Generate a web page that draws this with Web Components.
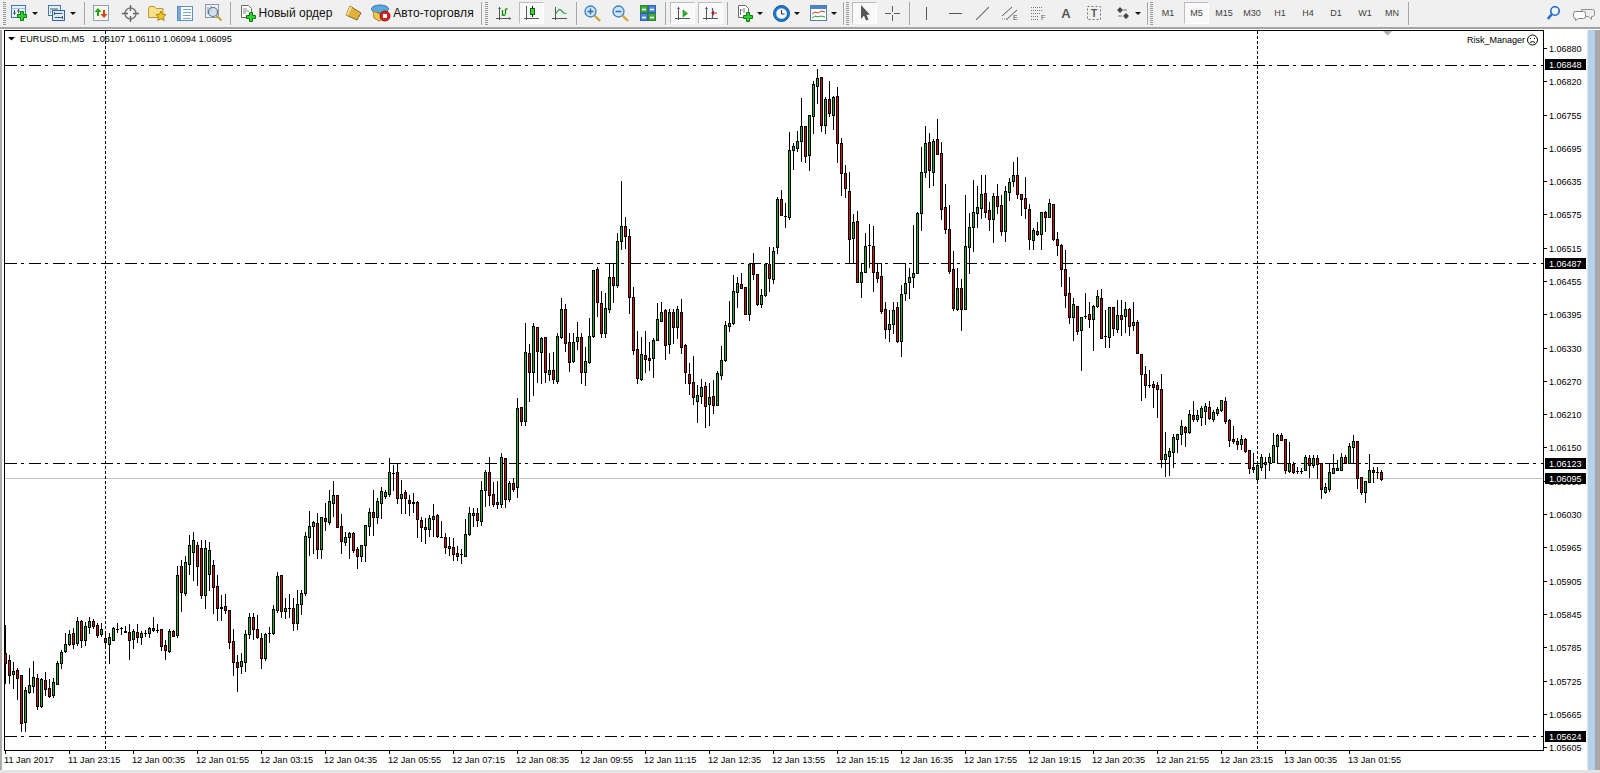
<!DOCTYPE html>
<html>
<head>
<meta charset="utf-8">
<style>
    html, body { margin: 0; height: 100%; overflow: hidden; background: #fff; }
    body { display: flex; flex-direction: column; width: 1600px; height: 773px; font-family: "Liberation Sans", Arial, sans-serif; }
</style>
</head>
<body>
<mt-toolbar>
    <mt-grip></mt-grip>
    <mt-tool w="21"><mt-icon name="newchart"></mt-icon></mt-tool>
    <mt-drop w="10"></mt-drop>
    <mt-tool w="21" ml="6"><mt-icon name="profile"></mt-icon></mt-tool>
    <mt-drop w="11"></mt-drop>
    <mt-sep ml="4"></mt-sep>
    <mt-tool w="28" ml="1"><mt-icon name="market"></mt-icon></mt-tool>
    <mt-tool w="28" ml="1"><mt-icon name="target"></mt-icon></mt-tool>
    <mt-tool w="26"><mt-icon name="fav"></mt-icon></mt-tool>
    <mt-tool w="28" ml="1"><mt-icon name="nav"></mt-icon></mt-tool>
    <mt-tool w="28" ml="1"><mt-icon name="tester"></mt-icon></mt-tool>
    <mt-sep></mt-sep>
    <mt-tool w="100" ml="4"><mt-icon name="order"></mt-icon><span>Новый ордер</span></mt-tool>
    <mt-tool w="24" ml="5"><mt-icon name="gold"></mt-icon></mt-tool>
    <mt-tool w="109" ml="3"><mt-icon name="auto"></mt-icon><span class="wide">Авто-торговля</span></mt-tool>
    <mt-sep ml="2"></mt-sep>
    <mt-grip w="7"></mt-grip>
    <mt-tool w="27"><mt-icon name="bars"></mt-icon></mt-tool>
    <mt-tool w="25" ml="2" pressed><mt-icon name="candles"></mt-icon></mt-tool>
    <mt-tool w="28" ml="1"><mt-icon name="line"></mt-icon></mt-tool>
    <mt-sep ml="1"></mt-sep>
    <mt-tool w="28"><mt-icon name="zoomin"></mt-icon></mt-tool>
    <mt-tool w="28"><mt-icon name="zoomout"></mt-icon></mt-tool>
    <mt-tool w="28"><mt-icon name="tile"></mt-icon></mt-tool>
    <mt-sep ml="1"></mt-sep>
    <mt-tool w="25" ml="3" pressed><mt-icon name="scroll"></mt-icon></mt-tool>
    <mt-tool w="25" ml="3" pressed><mt-icon name="shift"></mt-icon></mt-tool>
    <mt-sep ml="2"></mt-sep>
    <mt-tool w="24" ml="4"><mt-icon name="indic"></mt-icon></mt-tool>
    <mt-drop w="6"></mt-drop>
    <mt-tool w="24" ml="6"><mt-icon name="clock"></mt-icon></mt-tool>
    <mt-drop w="7"></mt-drop>
    <mt-tool w="25" ml="6"><mt-icon name="templ"></mt-icon></mt-tool>
    <mt-drop w="5"></mt-drop>
    <mt-sep ml="5"></mt-sep>
    <mt-grip w="5"></mt-grip>
    <mt-tool w="25" ml="2" pressed><mt-icon name="cursor"></mt-icon></mt-tool>
    <mt-tool w="27" ml="2"><mt-icon name="cross"></mt-icon></mt-tool>
    <mt-sep ml="1"></mt-sep>
    <mt-tool w="28" ml="1"><mt-icon name="vline"></mt-icon></mt-tool>
    <mt-tool w="28" ml="1"><mt-icon name="hline"></mt-icon></mt-tool>
    <mt-tool w="26"><mt-icon name="diag"></mt-icon></mt-tool>
    <mt-tool w="28" ml="1"><mt-icon name="channel"></mt-icon></mt-tool>
    <mt-tool w="28"><mt-icon name="fib"></mt-icon></mt-tool>
    <mt-tool w="28"><mt-icon name="textA"></mt-icon></mt-tool>
    <mt-tool w="28"><mt-icon name="textT"></mt-icon></mt-tool>
    <mt-tool w="24" ml="3"><mt-icon name="arrows"></mt-icon></mt-tool>
    <mt-drop w="5"></mt-drop>
    <mt-sep ml="5"></mt-sep>
    <mt-grip w="5"></mt-grip>
    <mt-tool w="28">M1</mt-tool>
    <mt-tool w="25" ml="2" pressed>M5</mt-tool>
    <mt-tool w="28" ml="1">M15</mt-tool>
    <mt-tool w="28">M30</mt-tool>
    <mt-tool w="28">H1</mt-tool>
    <mt-tool w="28">H4</mt-tool>
    <mt-tool w="28">D1</mt-tool>
    <mt-tool w="28" ml="1">W1</mt-tool>
    <mt-tool w="26">MN</mt-tool>
    <mt-sep ml="1"></mt-sep>
    <mt-tool w="26" ml="130"><mt-icon name="search"></mt-icon></mt-tool>
    <mt-tool w="27" ml="4"><mt-icon name="chat"></mt-icon></mt-tool>
</mt-toolbar>
<mt-workspace>
    <mt-chart></mt-chart>
    <mt-strip></mt-strip>
</mt-workspace>
<mt-foot></mt-foot>

<script>
    // high, body top, body bottom, low, colour (page y pixels), one candle every 4px from x=5
    const CANDLES = `
625 653 663 683 r|655 660 675 683 r|662 671 674 688 g|668 670 678 699 r|675 675 723 731 r|687 690 722 731 g|668 685 692 693 g|661 677 686 692 g|674 678 706 709 r|678 679 706 707 g
672 680 689 695 r|679 688 696 697 r|678 682 695 697 g|661 663 684 684 g|650 652 663 668 g|633 644 651 652 g|630 634 644 645 g|628 633 644 648 r|617 621 643 645 g|620 621 640 647 r
622 626 640 645 g|617 621 627 633 g|619 621 626 628 r|623 625 635 637 r|623 629 634 636 g|634 638 642 645 r|633 637 644 663 g|627 628 640 640 g|623 629 629 632 d|627 628 628 634 d
626 631 632 632 r|624 632 640 659 r|629 631 639 648 g|624 632 637 642 r|631 633 637 644 g|630 633 633 636 d|627 628 633 637 g|617 628 630 631 r|624 630 630 632 d|629 629 646 650 r
640 645 650 659 r|629 631 651 652 g|630 631 636 636 r|566 575 635 637 g|560 566 592 611 r|556 562 593 595 g|535 545 564 574 g|532 540 552 580 g|542 545 566 585 r|540 548 595 598 r
540 548 595 608 g|542 550 574 590 g|560 565 587 613 r|575 586 608 620 r|595 607 608 620 g|594 606 610 613 r|610 610 642 648 r|629 641 662 675 r|655 662 667 691 r|653 661 666 673 g
630 634 662 671 g|613 617 634 638 g|613 617 629 639 r|615 629 637 638 r|633 638 658 668 r|633 634 658 660 g|627 633 633 642 d|605 609 633 634 g|572 576 610 612 g|575 575 611 617 r
598 608 611 618 g|594 608 608 617 d|598 608 623 630 r|590 604 623 629 g|590 593 604 614 g|532 536 593 595 g|511 526 537 555 g|521 522 526 553 g|513 523 549 558 r|517 517 549 558 g
503 518 521 530 r|490 501 522 524 g|481 495 503 516 g|495 495 527 527 r|514 526 541 553 r|532 537 542 545 g|532 533 537 558 g|532 533 550 552 r|547 549 556 568 r|545 545 556 561 g
525 525 545 561 g|508 512 526 535 g|490 512 517 535 r|498 501 517 523 g|487 491 503 518 g|490 492 496 498 g|458 472 494 496 g|465 473 473 490 d|463 472 498 503 r|480 494 498 513 g
490 492 498 513 r|495 500 503 515 r|493 502 503 512 r|501 502 519 537 r|517 520 527 541 r|518 527 529 543 r|515 518 529 536 g|504 516 519 536 g|514 515 536 537 r|521 537 537 537 d
533 537 547 553 r|537 546 548 555 g|538 547 554 560 r|546 553 556 560 r|549 554 554 563 d|519 534 556 556 g|507 513 534 535 g|508 513 515 526 g|508 513 520 526 r|481 490 521 525 g
470 472 490 506 g|457 472 495 505 r|482 494 504 506 r|481 502 504 508 r|453 457 504 507 g|458 458 499 507 r|481 483 499 501 g|478 483 489 491 r|398 408 487 497 g|407 407 421 425 r
323 352 421 425 g|344 353 372 401 r|323 326 372 395 g|327 327 351 382 r|337 338 352 383 g|337 337 372 382 r|353 370 374 380 g|352 370 379 383 r|333 336 381 383 g|298 309 337 338 g
304 309 343 351 r|333 342 362 371 r|333 342 361 362 g|322 337 341 349 g|333 337 372 383 r|347 361 372 385 g|318 336 362 363 g|270 270 336 337 g|267 269 302 316 r|291 303 333 337 r
293 308 333 337 g|263 277 309 312 g|263 277 285 302 r|233 241 285 287 g|181 226 241 249 g|217 226 236 248 r|229 236 297 313 r|287 297 350 354 r|331 349 378 383 r|337 354 379 380 g
331 355 359 372 r|342 358 360 370 r|338 340 358 377 g|303 319 340 340 g|302 312 321 321 g|309 310 345 359 r|309 312 344 353 g|309 312 327 343 r|306 309 327 338 g|299 312 347 353 r
344 345 372 383 r|363 374 383 394 r|356 382 397 404 r|385 395 401 422 g|379 387 396 403 g|382 386 406 427 r|383 397 404 425 g|380 396 405 413 r|371 373 405 405 g|346 360 375 379 g
321 325 360 361 g|301 323 326 331 g|275 291 323 324 g|277 283 292 307 g|273 284 288 288 r|287 287 314 314 r|263 264 314 320 g|253 264 274 279 r|274 274 304 305 r|289 295 304 307 g
264 264 295 296 g|247 264 278 291 r|247 251 279 283 g|197 199 247 253 g|190 199 215 215 r|203 216 216 227 d|132 150 217 219 g|143 146 150 169 g|131 141 148 151 g|98 126 141 161 g
126 126 156 162 r|115 115 155 170 g|81 84 116 133 g|69 78 86 103 g|77 77 125 131 r|97 99 125 133 g|81 99 113 116 r|96 97 115 129 g|87 96 143 162 r|138 143 173 195 r
165 173 188 197 r|172 191 239 263 r|214 222 238 263 g|211 221 282 282 r|263 272 282 297 g|233 246 272 272 g|224 245 245 267 d|226 246 272 291 r|263 272 278 282 r|263 276 311 313 r
302 309 329 338 r|310 324 329 341 g|302 310 324 333 g|302 307 341 342 r|285 294 341 356 g|263 283 293 300 g|268 277 282 298 g|225 273 277 287 g|212 213 273 273 g|147 172 213 230 g
126 143 172 177 g|133 142 170 187 r|139 141 172 185 g|119 139 154 154 r|142 153 209 219 r|184 207 229 233 r|205 229 271 273 r|251 269 308 310 r|268 288 309 310 g|279 288 309 330 r
195 246 309 309 g|213 227 247 273 g|180 212 227 251 g|186 207 213 227 g|175 194 208 218 g|175 193 212 217 r|202 210 219 230 r|193 196 219 242 g|184 196 206 213 r|195 205 231 235 r
186 191 231 241 g|178 182 192 200 g|162 175 181 186 g|157 175 194 198 r|194 194 199 215 r|177 198 208 218 r|204 209 239 249 r|228 230 240 249 g|222 231 234 235 r|212 212 234 249 g
211 212 217 231 r|199 203 217 217 g|204 204 239 240 r|232 239 245 255 r|244 245 269 286 r|250 269 295 307 r|277 293 317 323 r|298 304 317 340 g|306 306 331 334 r|317 317 330 370 g
293 316 316 318 d|302 314 319 327 r|305 306 319 350 g|290 296 306 307 g|289 298 338 338 r|310 336 336 347 d|307 307 337 347 g|307 307 328 335 r|300 315 329 332 g|300 315 319 335 r
302 309 316 332 g|308 309 326 335 r|302 322 325 330 g|320 322 353 353 r|354 354 374 400 r|366 374 385 397 r|370 385 385 387 d|381 384 387 407 r|382 385 389 417 r|374 389 459 467 r
432 454 459 476 g|448 451 456 475 g|434 437 452 467 g|434 434 439 452 g|420 426 434 444 g|426 427 432 446 r|410 414 432 433 g|401 415 419 421 r|410 415 419 421 g|406 408 417 425 g
403 406 411 424 g|401 407 418 419 r|410 412 419 421 g|407 409 413 415 g|400 400 410 411 g|397 401 421 423 r|419 420 440 446 r|426 439 441 443 r|438 441 444 449 r|435 439 444 449 g
438 439 451 452 r|450 450 468 473 r|453 467 469 472 r|462 465 479 480 g|454 457 467 470 g|457 462 464 478 r|453 457 462 470 g|433 445 462 462 g|434 435 446 462 g|433 435 440 440 r
439 439 470 473 r|442 463 471 472 g|462 464 472 473 r|467 471 471 473 d|468 471 471 473 d|455 457 470 470 g|455 458 465 477 r|455 458 465 467 g|455 458 464 478 r|463 463 489 498 r
483 487 492 493 g|463 472 489 491 g|454 468 473 473 g|460 468 470 470 g|453 457 470 470 g|455 457 463 463 r|443 446 463 463 g|435 441 447 463 g|441 441 478 488 r|477 477 492 494 r
481 481 492 502 g|454 470 482 482 g|467 470 472 482 r|467 472 472 478 d|470 472 479 480 r`;

    const ICONS = {
        newchart: [18, 17, `<rect x=".5" y=".5" width="14" height="12" fill="#e8f2fb" stroke="#3f78b5"/><path d="M.5 3.5h14" stroke="#9cc0e4"/><path d="M3.5 5v5M2 8h3M7.5 4v4M6 6h3" stroke="#46586a" fill="none"/><path d="M9.5 6.5h3v3h3v3h-3v3h-3v-3h-3v-3h3z" fill="#2fd02f" stroke="#0b7d0b"/>`],
        profile: [17, 16, `<rect x=".5" y=".5" width="12" height="10" fill="#e8f2fb" stroke="#3f78b5"/><rect x="4.5" y="5.5" width="12" height="10" fill="#dcebf9" stroke="#2f66a8"/><path d="M2 4h8M2 7h1M6.500 8.500h8M6.500 12.500h8M6.500 7v3M14.500 11v3" stroke="#46586a" fill="none"/>`],
        market: [16, 16, `<rect x=".5" y=".5" width="15" height="15" fill="#fff5e6" stroke="#7fa6cf"/><path d="M5 3 1.500 7H4v4h2V7h2.500z" fill="#1fa51f"/><path d="M11 13l3.500-4H12V5h-2v4H7.500z" fill="#d8421c"/>`],
        target: [17, 17, `<circle cx="8.500" cy="8.500" r="5.500" fill="#f3f3f3" stroke="#7d7d7d" stroke-width="1.500"/><path d="M8.500 0v6M8.500 11v6M0 8.500h6M11 8.500h6" stroke="#666" stroke-width="1.400"/>`],
        fav: [19, 17, `<path d="M.5 3.500 1.500 1.500h5l1.500 2h7v9h-14.500z" fill="#f9e08a" stroke="#b89a3a"/><path d="M13 6l1.500 3.300 3.500.4-2.600 2.300.8 3.500-3.200-1.800-3.200 1.800.8-3.500L8 9.700l3.500-.4z" fill="#f5c518" stroke="#a8851a"/>`],
        nav: [16, 15, `<rect x=".5" y=".5" width="15" height="14" fill="#fff" stroke="#5b8fc7"/><rect x="1" y="1" width="3" height="13" fill="#7aa8d8"/><path d="M6 3.500h8M6 6.500h8M6 9.500h8M6 12.500h8" stroke="#7aa3cc"/>`],
        tester: [18, 18, `<rect x=".5" y=".5" width="13" height="13" fill="#eef0f3" stroke="#8b97a5"/><path d="M3 3v7M6 2v6" stroke="#7d8a99"/><circle cx="8" cy="8" r="4.500" fill="#c7dcf0" fill-opacity=".8" stroke="#60758c" stroke-width="1.200"/><path d="M11.500 11.500l5 5" stroke="#c9a23c" stroke-width="2.200"/>`],
        order: [17, 17, `<path d="M1.500.5h7l3 3v9h-10z" fill="#fff" stroke="#6b6b6b"/><path d="M3 4h4M3 6h6M3 8h3" stroke="#888"/><path d="M9.500 7.500h3v3h3v3h-3v3h-3v-3h-3v-3h3z" fill="#2fd02f" stroke="#0b7d0b"/>`],
        gold: [17, 16, `<path d="M5 1l11 7-4 7L1 10z" fill="#e2b03f" stroke="#8a6420"/><path d="M5 1 1 10l2 .500 4-8z" fill="#f6dc8e"/>`],
        auto: [20, 18, `<ellipse cx="9" cy="5" rx="8.500" ry="4" fill="#5aa9de" stroke="#2f76ae"/><path d="M2 7l1 7 5 3 5-2 2-7-6 2z" fill="#f1c94b" stroke="#a5832a"/><circle cx="14" cy="12" r="5" fill="#d8231c" stroke="#9c120e"/><rect x="12" y="10" width="4" height="4" fill="#fff"/>`],
        bars: [15, 15, `<path d="M3.500 1v13M0 12.500h15" stroke="#555"/><path d="M2 3l1.500-2L5 3M13 11l2 1.500-2 1.500" fill="#555"/><path d="M6.500 10V4M6.500 9h3M9.500 8V3M9.500 3h2" stroke="#0c960c" stroke-width="1.300" fill="none"/>`],
        candles: [15, 16, `<path d="M2.500 1v14M0 13.500h15" stroke="#555"/><path d="M2 3l.5-2L3 3" fill="#555"/><path d="M8.500 1v11" stroke="#111"/><rect x="6.500" y="3.500" width="4" height="6" fill="#3fd03f" stroke="#0c640c"/>`],
        line: [15, 15, `<path d="M3.500 1v13M0 12.500h15" stroke="#555"/><path d="M3.500 8 7 3.500l2 .5 2.500 3 3 .5" stroke="#20a43c" stroke-width="1.200" fill="none"/>`],
        zoomin: [17, 17, `<circle cx="6.500" cy="6.500" r="5.500" fill="#cfe5f9" stroke="#3a80c5" stroke-width="1.300"/><path d="M3.500 6.500h6M6.500 3.500v6" stroke="#2a70b5" stroke-width="1.500"/><path d="M10.500 10.500l5.500 5.500" stroke="#d1a63a" stroke-width="2.400"/>`],
        zoomout: [17, 17, `<circle cx="6.500" cy="6.500" r="5.500" fill="#cfe5f9" stroke="#3a80c5" stroke-width="1.300"/><path d="M3.500 6.500h6" stroke="#2a70b5" stroke-width="1.500"/><path d="M10.500 10.500l5.500 5.500" stroke="#d1a63a" stroke-width="2.400"/>`],
        tile: [16, 16, `<rect x=".5" y=".5" width="7" height="7" fill="#3fae3f" stroke="#2c862c"/><rect x="8.500" y=".5" width="7" height="7" fill="#4d86d9" stroke="#2d62b5"/><rect x=".5" y="8.500" width="7" height="7" fill="#4d86d9" stroke="#2d62b5"/><rect x="8.500" y="8.500" width="7" height="7" fill="#3fae3f" stroke="#2c862c"/><path d="M2 4.500h4M10 4.500h4M2 12.500h4M10 12.500h4" stroke="#fff" stroke-width="1.500"/>`],
        scroll: [15, 15, `<path d="M3.500 1v13M0 12.500h15" stroke="#555"/><path d="M2 3l1.500-2L5 3" fill="#555"/><path d="M8 4l4.500 3.500L8 11z" fill="#30b030" stroke="#158015" stroke-width=".6"/>`],
        shift: [15, 15, `<path d="M3.500 1v13M0 12.500h15" stroke="#555"/><path d="M2 3l1.500-2L5 3" fill="#555"/><path d="M9.500 2v10" stroke="#2a6aa8" stroke-width="1.200"/><path d="M14 6.500h-3V4.500L8 7l3 2.500v-2h3z" fill="#c01a0a"/>`],
        indic: [17, 17, `<path d="M1.500.5h7l3 3v9h-10z" fill="#fff" stroke="#6b6b6b"/><path d="M3.500 4v6M3.500 5h2M7 3v5" stroke="#777"/><path d="M9.500 7.500h3v3h3v3h-3v3h-3v-3h-3v-3h3z" fill="#2fd02f" stroke="#0b7d0b"/>`],
        clock: [17, 17, `<circle cx="8.500" cy="8.500" r="8" fill="#1f79c9" stroke="#145a9c"/><circle cx="8.500" cy="8.500" r="5.300" fill="#f4f7fb"/><path d="M8.500 5v4h3" stroke="#333" fill="none"/>`],
        templ: [17, 16, `<rect x=".5" y=".5" width="16" height="15" fill="#fff" stroke="#4d7fb3"/><rect x="1" y="1" width="15" height="3" fill="#4a86c5"/><path d="M2 9l3-2 3 1 3-2 4 1" stroke="#c0392b" fill="none"/><path d="M2 13l3-2 3 1 3-1 4 1" stroke="#28a028" fill="none"/>`],
        cursor: [10, 16, `<path d="M1 0v14l3-3.500 2 5 2.500-1-2-4.800H10z" fill="#555"/>`],
        cross: [15, 15, `<path d="M7.500 0v6M7.500 9v6M0 7.500h6M9 7.500h6" stroke="#5a5a5a"/>`],
        vline: [3, 13, `<path d="M1.500 0v13" stroke="#555"/>`],
        hline: [13, 3, `<path d="M0 1.500h13" stroke="#555"/>`],
        diag: [13, 13, `<path d="M0 13 13 0" stroke="#666" stroke-width="1.100"/>`],
        channel: [17, 15, `<path d="M0 10 10 1M4 14 15 4" stroke="#555"/><path d="M0 13h5" stroke="#888" stroke-dasharray="1 1"/><text x="11" y="14" font-size="7" font-family="Liberation Sans" fill="#555">E</text>`],
        fib: [16, 15, `<path d="M1 1.500h12M1 4.500h12M1 7.500h10M1 10.500h8M1 13.500h8" stroke="#777" stroke-dasharray="1 1"/><text x="11" y="14" font-size="7" font-family="Liberation Sans" fill="#555">F</text>`],
        textA: [12, 14, `<text x="6" y="12" font-size="13" font-family="Liberation Sans" font-weight="bold" text-anchor="middle" fill="#555">A</text>`],
        textT: [14, 14, `<rect x=".5" y=".5" width="13" height="13" fill="none" stroke="#777" stroke-dasharray="2 2"/><text x="7" y="11" font-size="10" font-family="Liberation Sans" font-weight="bold" text-anchor="middle" fill="#555">T</text>`],
        arrows: [14, 14, `<path d="M1 4l3-3 3 3-3 3zM7 10l3-3 3 3-3 3z" fill="#444"/><path d="M7 4l4 0M2 10l4 0" stroke="#777"/>`],
        search: [13, 14, `<circle cx="8" cy="5" r="4.200" fill="#eef5fd" stroke="#2468c8" stroke-width="1.600"/><path d="M4.800 8.200 0.800 13" stroke="#2468c8" stroke-width="2.400"/>`],
        chat: [22, 16, `<path d="M8.500 4.500h11a2 2 0 0 1 2 2v3a2 2 0 0 1-2 2h-1v3l-3-3H8.500z" fill="#eee" stroke="#909090"/><path d="M2.500 6.500h8a2 2 0 0 1 2 2v3a2 2 0 0 1-2 2h-5l-3 2v-2a2 2 0 0 1-2-2v-3a2 2 0 0 1 2-2z" fill="#fff" stroke="#848484"/>`]
    };

    class MtToolbar extends HTMLElement {
        constructor() {
            super();
            this.attachShadow({ mode: 'open' }).innerHTML = `
                <style>
                    :host {
                        display: flex; align-items: center; flex: none; box-sizing: border-box;
                        height: 30px; padding: 1px 0 4px; background: #f0f0f0;
                        border-bottom: 1px solid #fff; box-shadow: inset 0 -2px 0 #a4a4a4;
                        font: 9px "Liberation Sans", Arial, sans-serif; color: #404040;
                    }
                </style>
                <slot></slot>`;
        }
    }

    class MtTool extends HTMLElement {
        constructor() {
            super();
            this.attachShadow({ mode: 'open' }).innerHTML = `
                <style>
                    :host {
                        display: flex; align-items: center; justify-content: center; gap: 2px;
                        flex: none; box-sizing: border-box; height: 22px;
                    }
                    :host([pressed]) {
                        background: #f9f9f9;
                        border: 1px solid; border-color: #bcbcbc #fff #fff #bcbcbc;
                    }
                    ::slotted(span) { font-size: 12px; color: #111; white-space: nowrap; }
                    ::slotted(span.wide) { letter-spacing: .1px; }
                </style>
                <slot></slot>`;
        }
        connectedCallback() {
            this.style.width = this.getAttribute('w') + 'px';
            if (this.hasAttribute('ml')) this.style.marginLeft = this.getAttribute('ml') + 'px';
        }
    }

    class MtDrop extends HTMLElement {
        constructor() {
            super();
            this.attachShadow({ mode: 'open' }).innerHTML = `
                <style>
                    :host { display: flex; align-items: center; justify-content: center; flex: none; height: 22px; }
                    i { width: 0; height: 0; border: 3px solid transparent; border-top: 3px solid #111; border-bottom: 0; }
                </style>
                <i></i>`;
        }
        connectedCallback() {
            this.style.width = this.getAttribute('w') + 'px';
        }
    }

    class MtSep extends HTMLElement {
        constructor() {
            super();
            this.attachShadow({ mode: 'open' }).innerHTML = `
                <style>
                    :host { display: flex; justify-content: center; flex: none; width: 4px; height: 23px; }
                    i { width: 1px; background: #a8a8a8; }
                </style>
                <i></i>`;
        }
        connectedCallback() {
            if (this.hasAttribute('ml')) this.style.marginLeft = this.getAttribute('ml') + 'px';
        }
    }

    class MtGrip extends HTMLElement {
        constructor() {
            super();
            this.attachShadow({ mode: 'open' }).innerHTML = `
                <style>
                    :host { display: flex; justify-content: center; flex: none; height: 23px; }
                    i {
                        width: 3px; height: 100%;
                        background: repeating-linear-gradient(#9a9a9a 0 1px, #f0f0f0 1px 2px);
                    }
                </style>
                <i></i>`;
        }
        connectedCallback() {
            this.style.width = (this.getAttribute('w') || 9) + 'px';
        }
    }

    class MtIcon extends HTMLElement {
        constructor() {
            super();
            this.attachShadow({ mode: 'open' });
        }
        connectedCallback() {
            const [w, h, body] = ICONS[this.getAttribute('name')];
            this.shadowRoot.innerHTML = `
                <style>:host { display: block; flex: none; } svg { display: block; }</style>
                <svg width="${w}" height="${h}" viewBox="0 0 ${w} ${h}">${body}</svg>`;
        }
    }

    class MtWorkspace extends HTMLElement {
        constructor() {
            super();
            this.attachShadow({ mode: 'open' }).innerHTML = `
                <style>:host { display: flex; flex: 1; min-height: 0; }</style>
                <slot></slot>`;
        }
    }

    class MtStrip extends HTMLElement {
        constructor() {
            super();
            this.attachShadow({ mode: 'open' }).innerHTML = `
                <style>
                    :host { display: flex; flex: none; width: 13px; background: #e4e4e4; padding-left: 1px; box-sizing: border-box; }
                    i { width: 7px; background: #b6d1ea; }
                    b { flex: 1; background: #a9a9a9; }
                </style>
                <i></i><b></b>`;
        }
    }

    class MtFoot extends HTMLElement {
        constructor() {
            super();
            this.attachShadow({ mode: 'open' }).innerHTML = `
                <style>:host { display: block; flex: none; height: 3px; background: #e4e4e4; }</style>`;
        }
    }

    class MtChart extends HTMLElement {
        constructor() {
            super();
            this.attachShadow({ mode: 'open' });
        }
        connectedCallback() {
            const L = 4, T = 30, R = 1543, B = 750;
            let s = '';
            const rect = (x, y, w, h, f) => `<rect x="${x}" y="${y}" width="${w}" height="${h}" fill="${f}"/>`;
            const text = (x, y, t, f, size) => `<text x="${x}" y="${y}" fill="${f || '#000'}"${size ? ` font-size="${size}"` : ''}>${t}</text>`;

            // bid line, horizontal and vertical objects go under the candles
            s += rect(L, 478, R - L, 1, '#c0c0c0');
            [65, 263, 463, 736].forEach(y => {
                s += `<path class="hl" d="M${L + 1} ${y + .5}H${R}"/>`;
            });
            [105, 1257].forEach(x => {
                s += `<path class="vl" d="M${x + .5} ${T + 1}V${B}"/>`;
            });

            // candles
            CANDLES.trim().split(/[|\n]/).forEach((row, k) => {
                const [h, t, b, l, c] = row.trim().split(' ');
                const x = 5 + 4 * k, hi = +h, top = +t, bot = +b, lo = +l;
                s += rect(x, hi, 1, lo - hi + 1, '#000');
                s += rect(x - 1, top, 3, bot - top + 1, '#000');
                if (bot - top >= 2) s += rect(x, top + 1, 1, bot - top - 1, c === 'g' ? '#2fa82f' : '#cc0f0f');
            });

            // frame
            s += rect(L, T, R - L + 1, 1, '#000') + rect(L, B, R - L + 1, 1, '#000');
            s += rect(L, T, 1, B - T + 1, '#000') + rect(R, T, 1, B - T + 1, '#000');

            // price axis
            const prices = ['06880','06820','06755','06695','06635','06575','06515','06455','06395','06330','06270',
                '06210','06150','06090','06030','05965','05905','05845','05785','05725','05665','05605'];
            prices.forEach((p, i) => {
                const y = Math.round(48 + i * 33.29);
                s += rect(R + 1, y, 3, 1, '#000');
                s += text(1549, y + 4, '1.' + p);
            });
            [[1.06848, 64], [1.06487, 263], [1.06123, 463], [1.06095, 478], [1.05624, 736]].forEach(([v, y]) => {
                s += rect(1545, y - 5, 41, 11, '#000');
                s += text(1549, y + 4, v.toFixed(5), '#fff');
            });

            // time axis
            const times = ['11 Jan 2017','11 Jan 23:15','12 Jan 00:35','12 Jan 01:55','12 Jan 03:15','12 Jan 04:35',
                '12 Jan 05:55','12 Jan 07:15','12 Jan 08:35','12 Jan 09:55','12 Jan 11:15','12 Jan 12:35','12 Jan 13:55',
                '12 Jan 15:15','12 Jan 16:35','12 Jan 17:55','12 Jan 19:15','12 Jan 20:35','12 Jan 21:55','12 Jan 23:15',
                '13 Jan 00:35','13 Jan 01:55'];
            times.forEach((t, i) => {
                const x = 5 + 64 * i;
                s += rect(x, B + 1, 1, 3, '#000');
                s += text(x - 1, 763, t, '#000', 9.2);
            });

            // header, shift marker, expert name and its smiley
            s += `<path d="M8 37h7l-3.500 3.500z" fill="#000"/>`;
            s += text(20, 41.500, 'EURUSD.m,M5', '#000', 9.2);
            s += text(92, 41.500, '1.06107 1.06110 1.06094 1.06095', '#000', 9.2);
            s += `<path d="M1383 31h9l-4.500 4.500z" fill="#b0b0b0"/>`;
            s += text(1467, 43, 'Risk_Manager', '#000', 9);
            s += `<g fill="none" stroke="#000"><circle cx="1532.500" cy="40" r="5"/><path d="M1530 42.500q2.500-2 5 0"/></g>`;
            s += rect(1530, 38, 1, 1, '#000') + rect(1534, 38, 1, 1, '#000');

            this.shadowRoot.innerHTML = `
                <style>
                    :host { display: block; flex: 1; min-width: 0; border-left: 2px solid #ababab; }
                    svg { display: block; font: 9px "Liberation Sans", Arial, sans-serif; }
                    rect { shape-rendering: crispEdges; }
                    .hl { stroke: #000; stroke-dasharray: 12 4 3 5; fill: none; shape-rendering: crispEdges; }
                    .vl { stroke: #000; stroke-dasharray: 3 2; fill: none; shape-rendering: crispEdges; }
                </style>
                <svg width="1585" height="740" viewBox="2 30 1585 740">${s}</svg>`;
        }
    }

    customElements.define('mt-toolbar', MtToolbar);
    customElements.define('mt-tool', MtTool);
    customElements.define('mt-drop', MtDrop);
    customElements.define('mt-sep', MtSep);
    customElements.define('mt-grip', MtGrip);
    customElements.define('mt-icon', MtIcon);
    customElements.define('mt-workspace', MtWorkspace);
    customElements.define('mt-strip', MtStrip);
    customElements.define('mt-foot', MtFoot);
    customElements.define('mt-chart', MtChart);
</script>
</body>
</html>
